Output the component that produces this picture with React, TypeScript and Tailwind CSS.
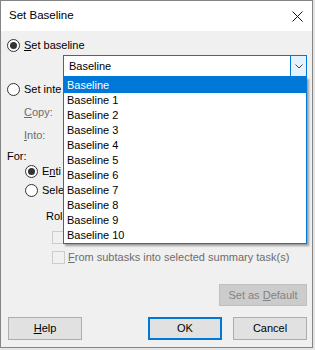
import React from 'react';

const Radio: React.FC<{ checked?: boolean }> = ({ checked }) => (
  <span className="flex h-[13px] w-[13px] shrink-0 items-center justify-center rounded-full border border-[#333333] bg-white">
    {checked && <span className="h-[7px] w-[7px] rounded-full bg-[#333333]" />}
  </span>
);

const Checkbox: React.FC = () => (
  <span className="h-[13px] w-[13px] shrink-0 border border-[#cccccc] bg-[#f0f0f0]" />
);

const baselines = ['Baseline', 'Baseline 1', 'Baseline 2', 'Baseline 3', 'Baseline 4', 'Baseline 5', 'Baseline 6', 'Baseline 7', 'Baseline 8', 'Baseline 9', 'Baseline 10'];

const App: React.FC = () => {
  return (
    <div className="h-[350px] w-[315px] bg-[#e4e4e4] text-[11px] text-black" style={{ fontFamily: '"Liberation Sans", Arial, sans-serif' }}>
      <div className="relative flex h-[348px] w-[313px] flex-col border border-[#858585] bg-[#f0f0f0]">
        {/* Title bar */}
        <div className="flex h-[30px] items-center justify-between bg-white pl-[8px] pr-[9px]">
          <span className="text-[11.5px]">Set Baseline</span>
          <svg width="11" height="11" viewBox="0 0 11 11">
            <path d="M0.5 0.5 L10.5 10.5 M10.5 0.5 L0.5 10.5" stroke="#111" strokeWidth="1" />
          </svg>
        </div>

        {/* Body */}
        <div className="flex flex-col pl-[6px]">
          <label className="mt-[7px] flex h-[15px] items-center gap-[4px]">
            <Radio checked />
            <span><span className="underline">S</span>et baseline</span>
          </label>

          <div className="ml-[56px] mt-[2px] flex h-[22px] w-[244px] border border-[#0078d7] bg-white">
            <span className="flex flex-1 items-center pl-[5px]">Baseline</span>
            <span className="flex w-[16px] items-center justify-center border-l border-[#0078d7] bg-[#e5f1fb]">
              <svg width="8" height="5" viewBox="0 0 8 5">
                <path d="M0.5 0.5 L4 4 L7.5 0.5" stroke="#444" strokeWidth="1" fill="none" />
              </svg>
            </span>
          </div>

          {/* labels below are cut off where the open list covers them */}
          <label className="mt-[5px] flex h-[15px] w-[56px] items-center gap-[4px] overflow-hidden whitespace-nowrap">
            <Radio />
            <span>Set inte</span>
          </label>

          <div className="mt-[4px] flex h-[22px] items-center pl-[17px] text-[#6d6d6d]">
            <span><span className="underline">C</span>opy:</span>
          </div>
          <div className="mt-[1px] flex h-[22px] items-center pl-[17px] text-[#6d6d6d]">
            <span><span className="underline">I</span>nto:</span>
          </div>

          <div className="mt-[3px] flex h-[15px] items-center">For:</div>

          <label className="ml-[18px] flex h-[15px] w-[38px] items-center gap-[4px] overflow-hidden whitespace-nowrap">
            <Radio checked />
            <span>E<span className="underline">n</span>ti</span>
          </label>
          <label className="ml-[18px] mt-[4px] flex h-[15px] w-[38px] items-center gap-[4px] overflow-hidden whitespace-nowrap">
            <Radio />
            <span>Sele</span>
          </label>

          <div className="ml-[39px] mt-[11px] flex h-[15px] w-[17px] items-center overflow-hidden whitespace-nowrap">Rol</div>

          <div className="ml-[45px] mt-[7px] flex h-[13px] items-center">
            <Checkbox />
          </div>
          <label className="ml-[45px] mt-[7px] flex h-[13px] items-center gap-[3px] text-[#6d6d6d]">
            <Checkbox />
            <span><span className="underline">F</span>rom subtasks into selected summary task(s)</span>
          </label>
        </div>

        <div className="mr-[5px] mt-[20px] flex justify-end">
          <button className="h-[22px] w-[88px] border border-[#bfbfbf] bg-[#cccccc] text-[#838383]">
            Set as <span className="underline">D</span>efault
          </button>
        </div>

        <div className="mr-[5px] mt-[11px] flex items-center justify-between pl-[7px]">
          <button className="h-[23px] w-[74px] border border-[#adadad] bg-[#e1e1e1]">
            <span className="underline">H</span>elp
          </button>
          <div className="flex gap-[11px]">
            <button className="h-[23px] w-[74px] border-2 border-[#0078d7] bg-[#e1e1e1]">OK</button>
            <button className="h-[23px] w-[74px] border border-[#adadad] bg-[#e1e1e1]">Cancel</button>
          </div>
        </div>

        {/* Open dropdown list */}
        <div className="absolute left-[62px] top-[76px] w-[244px] border border-[#0078d7] bg-white shadow-[2px_2px_2px_rgba(0,0,0,0.35)]">
          {baselines.map((b, i) => (
            <div
              key={b}
              className={`flex h-[15px] items-center pl-[3px] ${i === 0 ? 'bg-[#0078d7] text-white' : 'text-black'}`}
            >
              {b}
            </div>
          ))}
        </div>
      </div>
    </div>
  );
};

export default App;
